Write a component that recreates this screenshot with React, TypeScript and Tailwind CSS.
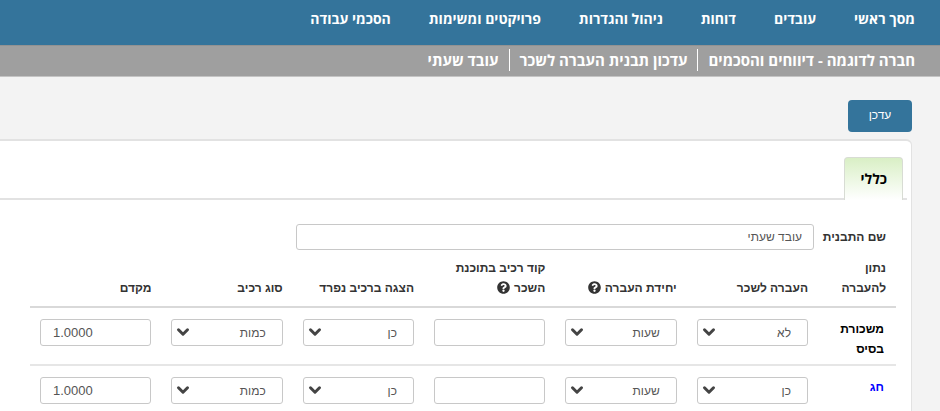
import { ChevronDown } from "lucide-react";
import { FaQuestionCircle } from "react-icons/fa";

const NAV_ITEMS = ["מסך ראשי", "עובדים", "דוחות", "ניהול והגדרות", "פרויקטים ומשימות", "הסכמי עבודה"];

const BREADCRUMBS = ["חברה לדוגמה - דיווחים והסכמים", "עדכון תבנית העברה לשכר", "עובד שעתי"];

const COLUMNS = [
    { label: "העברה לשכר" },
    { label: "יחידת העברה", help: true },
    { label: "קוד רכיב בתוכנת השכר", help: true },
    { label: "הצגה ברכיב נפרד" },
    { label: "סוג רכיב" },
    { label: "מקדם" },
];

const ROWS = [
    { name: "משכורת בסיס", transfer: "לא", unit: "שעות", code: "", separate: "כן", kind: "כמות", factor: "1.0000" },
    { name: "חג", link: true, transfer: "כן", unit: "שעות", code: "", separate: "כן", kind: "כמות", factor: "1.0000" },
];

const fieldClass =
    "block w-full rounded-[3px] border border-[#c8c8c8] bg-white font-['Liberation_Sans',sans-serif] text-[#555]";

function SelectField({ label, value, options }: { label: string; value: string; options: string[] }) {
    return (
        <div className="relative">
            <select
                aria-label={label}
                defaultValue={value}
                className={`${fieldClass} h-[27px] appearance-none pr-4 pl-6 text-xs`}
            >
                {options.map((option) => (
                    <option key={option}>{option}</option>
                ))}
            </select>
            <ChevronDown
                className="pointer-events-none absolute top-1 left-[3px] size-[18px] text-[#444]"
                strokeWidth={4}
            />
        </div>
    );
}

function Header() {
    return (
        <header className="font-['Open_Sans','Liberation_Sans',sans-serif] font-bold text-white">
            <nav className="flex h-[45px] items-center gap-[38px] bg-[#34749b] pr-[25px] pb-2 text-sm whitespace-nowrap">
                {NAV_ITEMS.map((item) => (
                    <a key={item} href="#">
                        {item}
                    </a>
                ))}
            </nav>
            <div className="flex h-8 items-center border-t border-b border-t-[#929292] border-b-[#c4c4c4] bg-[#9f9f9f] pr-[25px] pb-0.5 text-[15px] whitespace-nowrap">
                {BREADCRUMBS.map((crumb, index) => (
                    <a
                        key={crumb}
                        href="#"
                        className={index > 0 ? "mr-2.5 border-r border-white pr-2.5" : ""}
                    >
                        {crumb}
                    </a>
                ))}
            </div>
        </header>
    );
}

function TransferTable() {
    return (
        <table className="w-full table-fixed border-collapse text-right text-xs leading-5">
            <thead>
                <tr className="border-b-2 border-[#d9d9d9] align-bottom text-[#333]">
                    <th className="w-[78px] pr-2.5 pb-2">נתון להעברה</th>
                    {COLUMNS.map((column) => (
                        <th key={column.label} className="px-2.5 pb-2">
                            {column.label}
                            {column.help && <FaQuestionCircle className="mr-1 inline size-[13px] align-[-2px]" />}
                        </th>
                    ))}
                </tr>
            </thead>
            <tbody>
                {ROWS.map((row) => (
                    <tr key={row.name} className="h-[58px] border-b-2 border-[#e6e6e6] align-top">
                        <th className="pt-[11px] pr-3 pb-1 text-black">
                            {row.link ? (
                                <a href="#" className="text-[#0000ff]">
                                    {row.name}
                                </a>
                            ) : (
                                row.name
                            )}
                        </th>
                        <td className="px-2.5 pt-[11px]">
                            <SelectField label="העברה לשכר" value={row.transfer} options={["כן", "לא"]} />
                        </td>
                        <td className="px-2.5 pt-[11px]">
                            <SelectField label="יחידת העברה" value={row.unit} options={["שעות"]} />
                        </td>
                        <td className="px-2.5 pt-[11px]">
                            <input
                                aria-label="קוד רכיב בתוכנת השכר"
                                defaultValue={row.code}
                                className={`${fieldClass} h-[27px] px-3 text-xs`}
                            />
                        </td>
                        <td className="px-2.5 pt-[11px]">
                            <SelectField label="הצגה ברכיב נפרד" value={row.separate} options={["כן", "לא"]} />
                        </td>
                        <td className="px-2.5 pt-[11px]">
                            <SelectField label="סוג רכיב" value={row.kind} options={["כמות"]} />
                        </td>
                        <td className="px-2.5 pt-[11px]">
                            <input
                                aria-label="מקדם"
                                dir="ltr"
                                defaultValue={row.factor}
                                className={`${fieldClass} h-[27px] px-3 text-left text-[13px]`}
                            />
                        </td>
                    </tr>
                ))}
            </tbody>
        </table>
    );
}

export default function App() {
    return (
        <div
            dir="rtl"
            className="min-h-screen overflow-hidden bg-[#f3f3f3] font-['Liberation_Sans',sans-serif]"
        >
            <Header />
            <main className="pt-[23px] pr-7">
                <button
                    type="button"
                    className="block h-8 w-16 rounded bg-[#34749b] pb-0.5 text-xs text-white"
                >
                    עדכן
                </button>
                <section className="mt-[7px] rounded-tr-md border-t-2 border-r border-[#e2e2e2] bg-white pt-4">
                    <div role="tablist" className="mr-1 flex border-b-2 border-[#e2e2e2] pr-1">
                        <button
                            type="button"
                            role="tab"
                            aria-selected="true"
                            className="-mb-0.5 h-[43px] rounded-t border border-b-0 border-[#d8dcd4] bg-linear-to-b from-[#d9efc5] to-white px-[15px] font-['Open_Sans','Liberation_Sans',sans-serif] text-sm font-bold text-black"
                        >
                            כללי
                        </button>
                    </div>
                    <div className="pt-6 pr-[15px] pl-[30px]">
                        <div className="mb-2 flex items-center pr-2.5">
                            <label
                                htmlFor="template-name"
                                className="w-[72px] shrink-0 text-xs font-bold whitespace-nowrap text-[#333]"
                            >
                                שם התבנית
                            </label>
                            <div className="w-full max-w-[518px]">
                                <input
                                    id="template-name"
                                    defaultValue="עובד שעתי"
                                    className={`${fieldClass} h-[26px] px-[11px] text-xs`}
                                />
                            </div>
                        </div>
                        <TransferTable />
                    </div>
                </section>
            </main>
        </div>
    );
}
